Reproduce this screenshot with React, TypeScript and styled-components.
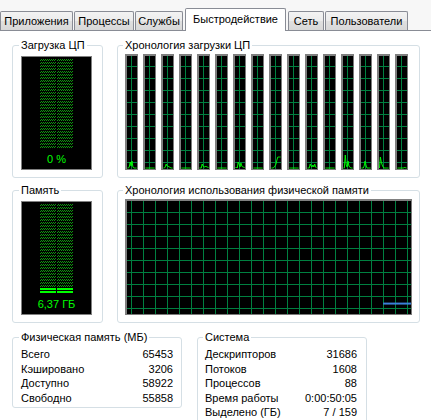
import React from 'react';
import styled, { createGlobalStyle } from 'styled-components';

const GlobalStyle = createGlobalStyle`
  html, body {
    margin: 0;
    padding: 0;
    background: #fff;
  }
  body {
    font-family: "Liberation Sans", Arial, sans-serif;
    font-size: 11px;
    color: #000;
    overflow: hidden;
  }
`;

const Window = styled.div`
  width: 431px;
  height: 420px;
  overflow: hidden;
  background: #fff;
`;

const TabStrip = styled.div`
  display: flex;
  align-items: flex-end;
  gap: 1px;
  height: 30px;
  background: #f7f7f7;
  border-bottom: 1px solid #898c95;
`;

const Tab = styled.div<{ $w: number; $active?: boolean }>`
  box-sizing: border-box;
  width: ${(p) => p.$w}px;
  height: ${(p) => (p.$active ? 23 : 19)}px;
  margin: ${(p) => (p.$active ? '0 1px -1px 1px' : '0')};
  padding-bottom: ${(p) => (p.$active ? 3 : 0)}px;
  border: 1px solid #898c95;
  border-bottom: none;
  border-radius: 2px 2px 0 0;
  background: ${(p) =>
    p.$active ? '#fff' : 'linear-gradient(#f3f3f3, #ebebeb 50%, #e0e0e0 50%, #d8d8d8)'};
  display: flex;
  align-items: center;
  justify-content: center;
  font-size: 11px;
  white-space: nowrap;
  position: relative;
  z-index: ${(p) => (p.$active ? 1 : 0)};
`;

const Panel = styled.div`
  padding: 7px 0 0 12px;
`;

const TopGrid = styled.div`
  display: grid;
  grid-template-columns: 91px 303px;
  column-gap: 14px;
  row-gap: 5px;
`;

const Group = styled.fieldset<{ $pad: string }>`
  margin: 0;
  min-width: 0;
  border: 1px solid #d5dfe5;
  border-radius: 3px;
  padding: ${(p) => p.$pad};
`;

const Legend = styled.legend`
  padding: 0 2px;
  margin-left: -2px;
  line-height: 14px;
  font-size: 11px;
`;

const Gauge = styled.div`
  box-sizing: border-box;
  width: 71px;
  height: 114px;
  background: #000;
  border: 1px solid #808080;
  display: flex;
  flex-direction: column;
  align-items: center;
  padding-top: 2px;
`;

const LedBars = styled.div`
  display: flex;
  gap: 1px;
  height: 90px;
`;

const LedColumn = styled.div`
  width: 16px;
  display: flex;
  flex-direction: column;
  gap: 1px;
`;

const Led = styled.div<{ $lit?: boolean }>`
  height: 2px;
  background: ${(p) =>
    p.$lit
      ? '#00ff00'
      : 'conic-gradient(#0f960f 25%, transparent 0 50%, #0f960f 0 75%, transparent 0) 0 0 / 2px 2px'};
`;

const GaugeValue = styled.div`
  margin-top: 3px;
  line-height: 14px;
  font-size: 11px;
  color: #00ff00;
`;

const CpuGraphs = styled.div`
  display: flex;
  gap: 5px;
`;

const GraphBox = styled.div<{ $w: number; $gx: number; $gy: number }>`
  box-sizing: border-box;
  width: ${(p) => p.$w}px;
  height: 116px;
  background-color: #000;
  background-image: linear-gradient(#008040 1px, transparent 1px),
    linear-gradient(90deg, #008040 1px, transparent 1px);
  background-size: 12px 12px;
  background-position: ${(p) => `${p.$gx}px ${p.$gy}px`};
  border: 1px solid #7a7a7a;
  border-top: 2px solid #808080;
  border-left: 2px solid #808080;
  overflow: hidden;

  svg {
    display: block;
    width: 100%;
    height: 100%;
  }
`;

const Bottom = styled.div`
  display: flex;
  gap: 15px;
  margin-top: 7px;
  align-items: flex-start;
`;

const Column = styled.div`
  display: flex;
  flex-direction: column;
  gap: 9px;
  width: 170px;
`;

const StatRow = styled.div`
  display: flex;
  justify-content: space-between;
  line-height: 14.5px;
  font-size: 11px;
  white-space: nowrap;
`;

const cpuData: number[][] = [
  [1, 1, 2, 7, 3, 8, 2, 1, 1, 1, 1],
  [1, 1, 1, 1, 1, 1, 1, 1, 1, 1, 1],
  [1, 1, 2, 5, 3, 3, 2, 2, 1, 1, 1],
  [1, 1, 1, 1, 1, 1, 1, 1, 1, 1, 1],
  [1, 1, 1, 5, 3, 2, 2, 3, 2, 2, 1],
  [1, 1, 1, 1, 1, 1, 1, 1, 1, 1, 1],
  [1, 2, 1, 7, 5, 2, 6, 3, 2, 2, 1],
  [1, 1, 1, 1, 1, 1, 1, 1, 1, 1, 1],
  [1, 1, 1, 2, 3, 5, 9, 12, 12, 12, 12],
  [1, 1, 1, 1, 1, 1, 1, 1, 1, 1, 1],
  [1, 1, 1, 5, 3, 2, 4, 2, 5, 2, 1],
  [1, 1, 1, 1, 1, 1, 1, 1, 1, 1, 1],
  [1, 1, 14, 4, 2, 8, 3, 2, 1, 1, 1],
  [1, 1, 1, 3, 8, 4, 1, 1, 1, 1, 1],
  [1, 12, 7, 4, 2, 1, 1, 1, 1, 1, 1],
  [1, 1, 1, 1, 1, 1, 1, 1, 2, 1, 1],
];

const tabs = [
  { label: 'Приложения', w: 73 },
  { label: 'Процессы', w: 60 },
  { label: 'Службы', w: 48 },
  { label: 'Быстродействие', w: 101, active: true },
  { label: 'Сеть', w: 36 },
  { label: 'Пользователи', w: 83 },
];

const physical = [
  ['Всего', '65453'],
  ['Кэшировано', '3206'],
  ['Доступно', '58922'],
  ['Свободно', '55858'],
];

const kernel = [
  ['Всего', '331'],
  ['Выгружаемая', '236'],
  ['Невыгружаемая', '94'],
];

const system = [
  ['Дескрипторов', '31686'],
  ['Потоков', '1608'],
  ['Процессов', '88'],
  ['Время работы', '0:00:50:05'],
  ['Выделено (ГБ)', '7 / 159'],
];

const LedGauge = ({ lit, value }: { lit: number; value: string }) => (
  <Gauge>
    <LedBars>
      {[0, 1].map((c) => (
        <LedColumn key={c}>
          {Array.from({ length: 30 }, (_, i) => (
            <Led key={i} $lit={i >= 30 - lit} />
          ))}
        </LedColumn>
      ))}
    </LedBars>
    <GaugeValue>{value}</GaugeValue>
  </Gauge>
);

const CpuGraph = ({ data }: { data: number[] }) => {
  const h = 113;
  const pts = data.map((v, i) => `${i + 0.5},${h - v}`).join(' ');
  return (
    <GraphBox $w={13} $gx={4} $gy={10}>
      <svg viewBox={`0 0 11 ${h}`} preserveAspectRatio="none">
        <polyline points={pts} fill="none" stroke="#00ff00" strokeWidth="1" />
      </svg>
    </GraphBox>
  );
};

const StatTable = ({ rows }: { rows: string[][] }) => (
  <>
    {rows.map(([k, v]) => (
      <StatRow key={k}>
        <span>{k}</span>
        <span>{v}</span>
      </StatRow>
    ))}
  </>
);

export default function App() {
  return (
    <Window>
      <GlobalStyle />
      <TabStrip>
        {tabs.map((t) => (
          <Tab key={t.label} $w={t.w} $active={t.active}>
            {t.label}
          </Tab>
        ))}
      </TabStrip>
      <Panel>
        <TopGrid>
          <Group $pad="4px 10px 7px 8px">
            <Legend>Загрузка ЦП</Legend>
            <LedGauge lit={0} value="0 %" />
          </Group>
          <Group $pad="2px 7px 7px 7px">
            <Legend>Хронология загрузки ЦП</Legend>
            <CpuGraphs>
              {cpuData.map((d, i) => (
                <CpuGraph key={i} data={d} />
              ))}
            </CpuGraphs>
          </Group>
          <Group $pad="4px 10px 7px 8px">
            <Legend>Память</Legend>
            <LedGauge lit={2} value="6,37 ГБ" />
          </Group>
          <Group $pad="2px 7px 7px 7px">
            <Legend>Хронология использования физической памяти</Legend>
            <GraphBox $w={287} $gx={4} $gy={11}>
              <svg viewBox="0 0 285 114" preserveAspectRatio="none">
                <line x1="257" y1="103.5" x2="285" y2="103.5" stroke="#3b80d8" strokeWidth="2" />
              </svg>
            </GraphBox>
          </Group>
        </TopGrid>
        <Bottom>
          <Column>
            <Group $pad="3px 8px 2px 8px">
              <Legend>Физическая память (МБ)</Legend>
              <StatTable rows={physical} />
            </Group>
            <Group $pad="3px 8px 2px 8px">
              <Legend>Память ядра (МБ)</Legend>
              <StatTable rows={kernel} />
            </Group>
          </Column>
          <Column>
            <Group $pad="3px 9px 2px 7px">
              <Legend>Система</Legend>
              <StatTable rows={system} />
            </Group>
          </Column>
        </Bottom>
      </Panel>
    </Window>
  );
}
